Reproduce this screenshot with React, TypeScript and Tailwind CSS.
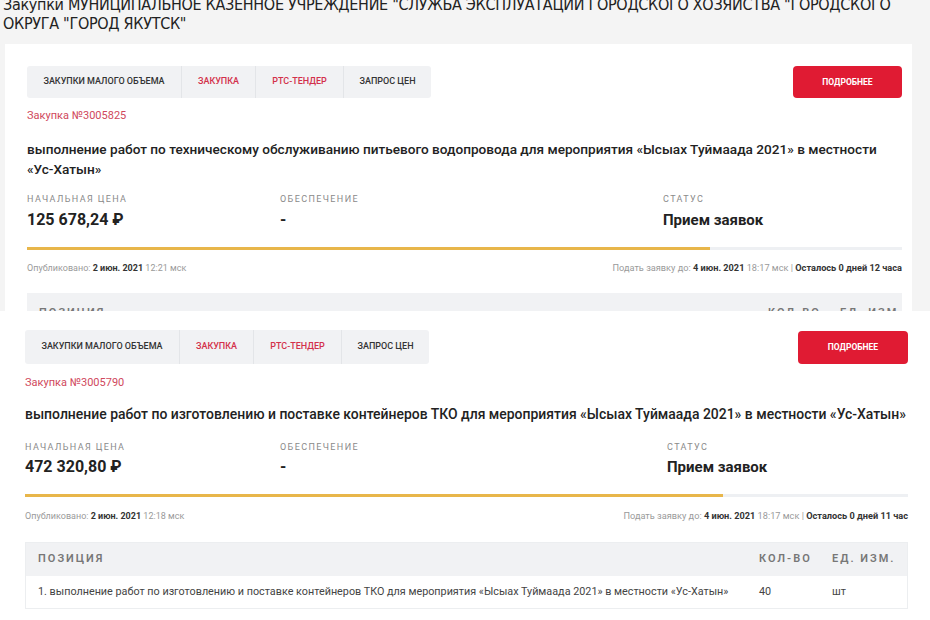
import React from 'react'

const TABS = [
  { label: 'Закупки малого объема', w: 'w-[154px]', red: false },
  { label: 'Закупка', w: 'w-[74px]', red: true },
  { label: 'РТС-тендер', w: 'w-[88px]', red: true },
  { label: 'Запрос цен', w: 'w-[88px]', red: false },
]

function Tabs({ tall }: { tall?: boolean }) {
  return (
    <div className={`flex rounded-[3px] bg-[#f1f2f4] ${tall ? 'h-[34px]' : 'h-[32px]'}`}>
      {TABS.map((t, i) => (
        <div
          key={t.label}
          className={`${t.w} flex items-center justify-center text-[9px] font-medium uppercase ${
            t.red ? 'text-[#d3304a]' : 'text-[#333]'
          } ${i > 0 ? 'border-l border-[#e3e5e8]' : ''}`}
        >
          {t.label}
        </div>
      ))}
    </div>
  )
}

function MoreButton({ tall }: { tall?: boolean }) {
  return (
    <button
      className={`rounded-[4px] bg-[#e01b33] text-[8.5px] font-bold uppercase text-white ${
        tall ? 'h-[33px] w-[110px]' : 'h-[32px] w-[109px]'
      }`}
    >
      Подробнее
    </button>
  )
}

function Stats({ price, second }: { price: string; second?: boolean }) {
  return (
    <div className={`grid ${second ? 'grid-cols-[255px_387px_1fr]' : 'grid-cols-[253px_383px_1fr]'}`}>
      <div>
        <div className="text-[9px] leading-[12px] uppercase tracking-[1.4px] text-[#8a8a8a]">Начальная цена</div>
        <div className={`${second ? 'mt-[4px]' : 'mt-[5px]'} text-[16px] leading-[20px] font-bold text-[#222]`}>{price}</div>
      </div>
      <div>
        <div className="text-[9px] leading-[12px] uppercase tracking-[1.4px] text-[#8a8a8a]">Обеспечение</div>
        <div className={`${second ? 'mt-[4px]' : 'mt-[5px]'} text-[16px] leading-[20px] font-bold text-[#222]`}>-</div>
      </div>
      <div>
        <div className="text-[9px] leading-[12px] uppercase tracking-[1.4px] text-[#8a8a8a]">Статус</div>
        <div className={`${second ? 'mt-[4px]' : 'mt-[5px]'} text-[15px] leading-[20px] font-bold text-[#222]`}>Прием заявок</div>
      </div>
    </div>
  )
}

function Progress({ pct }: { pct: number }) {
  return (
    <div className="h-[3px] w-full bg-[#eef0f3]">
      <div className="h-full bg-[#e8b64a]" style={{ width: `${pct}%` }} />
    </div>
  )
}

function Meta({ pub, left }: { pub: string; left: string }) {
  return (
    <div className="flex items-center justify-between text-[9px] leading-[12px] text-[#9a9a9a]">
      <div>
        Опубликовано: <span className="font-bold text-[#333]">2 июн. 2021</span> {pub} мск
      </div>
      <div className="text-[9.2px]">
        Подать заявку до: <span className="font-bold text-[#333]">4 июн. 2021</span> 18:17 мск |{' '}
        <span className="font-bold text-[#333]">{left}</span>
      </div>
    </div>
  )
}

export default function App() {
  return (
    <div className="h-[620px] w-[930px] overflow-hidden bg-white" style={{ fontFamily: 'Roboto, "Open Sans", sans-serif' }}>
      {/* first screenshot, clipped */}
      <div className="h-[311px] overflow-hidden bg-[#f4f4f4]">
        <h1
          className="-mt-[5px] pl-[3px] pr-[15px] text-[16px] leading-[19px] tracking-[-0.3px] text-[#222]"
          style={{ fontFamily: '"Liberation Sans Narrow", "DejaVu Sans Condensed", sans-serif' }}
        >
          Закупки МУНИЦИПАЛЬНОЕ КАЗЕННОЕ УЧРЕЖДЕНИЕ "СЛУЖБА ЭКСПЛУАТАЦИИ ГОРОДСКОГО ХОЗЯЙСТВА "ГОРОДСКОГО ОКРУГА "ГОРОД ЯКУТСК"
        </h1>
        <div className="ml-[5px] mr-[18px] mt-[11px] bg-white pl-[22px] pr-[10px] pt-[22px]">
          <div className="flex items-start justify-between">
            <Tabs />
            <MoreButton />
          </div>
          <div className="mt-[11px] text-[11px] leading-[14px] text-[#d0485c]">Закупка №3005825</div>
          <div className="mt-[16px] pr-[4px] text-[13.6px] leading-[20px] font-medium text-[#222]">
            выполнение работ по техническому обслуживанию питьевого водопровода для мероприятия «Ысыах Туймаада 2021» в местности «Ус-Хатын»
          </div>
          <div className="mt-[14px]">
            <Stats price="125 678,24 ₽" />
          </div>
          <div className="mt-[17px]">
            <Progress pct={78} />
          </div>
          <div className="mt-[12px]">
            <Meta pub="12:21" left="Осталось 0 дней 12 часа" />
          </div>
          <div className="mt-[19px] flex h-[34px] whitespace-nowrap bg-[#f1f2f4] pt-[12px] text-[11px] font-semibold uppercase tracking-[2px] text-[#777]">
            <div className="flex-1 pl-[12px]">Позиция</div>
            <div className="w-[72px]">Кол-во</div>
            <div className="w-[62px]">Ед. изм.</div>
          </div>
        </div>
      </div>

      {/* second screenshot */}
      <div className="pl-[25px] pr-[22px] pt-[19px]">
        <div className="flex items-start justify-between">
          <Tabs tall />
          <div className="pt-[1px]">
            <MoreButton tall />
          </div>
        </div>
        <div className="mt-[12px] text-[11px] leading-[14px] text-[#d0485c]">Закупка №3005790</div>
        <div className="mt-[14px] whitespace-nowrap text-[13.95px] leading-[20px] font-medium text-[#222]">
          выполнение работ по изготовлению и поставке контейнеров ТКО для мероприятия «Ысыах Туймаада 2021» в местности «Ус-Хатын»
        </div>
        <div className="mt-[17px]">
          <Stats price="472 320,80 ₽" second />
        </div>
        <div className="mt-[17px]">
          <Progress pct={79} />
        </div>
        <div className="mt-[13px]">
          <Meta pub="12:18" left="Осталось 0 дней 11 час" />
        </div>
        <div className="mt-[20px] border border-[#eceef0]">
          <div className="flex h-[33px] items-center bg-[#f1f2f4] text-[11px] font-semibold uppercase tracking-[2px] text-[#777]">
            <div className="flex-1 pl-[12px]">Позиция</div>
            <div className="w-[73px]">Кол-во</div>
            <div className="w-[75px]">Ед. изм.</div>
          </div>
          <div className="flex h-[32px] items-center text-[10.8px] text-[#444]">
            <div className="flex-1 pl-[12px]">
              1. выполнение работ по изготовлению и поставке контейнеров ТКО для мероприятия «Ысыах Туймаада 2021» в местности «Ус-Хатын»
            </div>
            <div className="w-[73px]">40</div>
            <div className="w-[75px]">шт</div>
          </div>
        </div>
      </div>
    </div>
  )
}
